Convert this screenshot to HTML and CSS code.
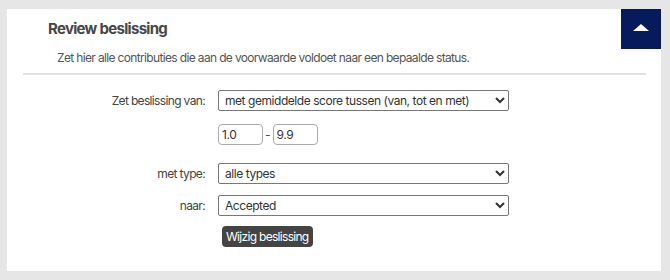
FILE: index.html
```html
<!DOCTYPE html>
<html lang="nl">
<head>
<meta charset="utf-8">
<link rel="stylesheet" href="styles.css">
</head>
<body>
<div class="card">
  <div class="header">
    <h2 class="title">Review beslissing</h2>
    <button class="collapse" aria-label="Inklappen">
      <svg width="16" height="8" viewBox="0 0 16 8"><polygon points="0,7 8,0 16,7" fill="#fff"/></svg>
    </button>
  </div>
  <p class="desc">Zet hier alle contributies die aan de voorwaarde voldoet naar een bepaalde status.</p>
  <hr class="divider">
  <form class="form">
    <div class="row row-first">
      <label class="label">Zet beslissing van:</label>
      <select class="select"><option>met gemiddelde score tussen (van, tot en met)</option></select>
    </div>
    <div class="row row-range">
      <span class="label"></span>
      <div class="range">
        <input class="num" type="text" value="1.0">
        <span class="dash">-</span>
        <input class="num" type="text" value="9.9">
      </div>
    </div>
    <div class="row row-type">
      <label class="label">met type:</label>
      <select class="select"><option>alle types</option></select>
    </div>
    <div class="row row-naar">
      <label class="label">naar:</label>
      <select class="select"><option>Accepted</option></select>
    </div>
    <div class="row row-btn">
      <span class="label"></span>
      <button type="button" class="submit">Wijzig beslissing</button>
    </div>
  </form>
</div>
</body>
</html>
```
FILE: styles.css
```css
html, body {
  margin: 0;
  background: #e6e6e6;
}
body {
  padding: 9px 9px 9px 7px;
  font-family: Inter, "Noto Sans", sans-serif;
}
.card {
  background: #fff;
  height: 262px;
  box-sizing: border-box;
  position: relative;
}
.header {
  display: flex;
  justify-content: space-between;
  align-items: flex-start;
}
.title {
  margin: 0;
  padding: 11px 0 0 41px;
  font-size: 15px;
  font-weight: 700;
  color: #474747;
  letter-spacing: -0.7px;
  line-height: 18px;
}
.collapse {
  width: 40px;
  height: 40px;
  border: 0;
  padding: 0;
  background: #061a5c;
  display: flex;
  align-items: center;
  justify-content: center;
  margin: 0;
}
.collapse svg { display: block; margin-top: -2px; }
.desc {
  margin: 1px 0 0 50px;
  font-size: 12px;
  line-height: 15px;
  color: #555;
  letter-spacing: -0.65px;
}
.divider {
  margin: 8px 15px 0 16px;
  border: 0;
  border-top: 2px solid #e2e2e2;
  height: 0;
}
.form {
  padding-top: 15px;
}
.row {
  display: flex;
  align-items: center;
}
.label {
  width: 198px;
  text-align: right;
  padding-right: 13px;
  font-size: 12px;
  color: #444;
  letter-spacing: -0.65px;
  flex: none;
}
.select {
  width: 291px;
  height: 21px;
  box-sizing: border-box;
  font-family: Inter, "Noto Sans", sans-serif;
  font-size: 12px;
  color: #333;
  border: 1px solid #777;
  border-radius: 2px;
  background: #fff;
  padding: 0 2px;
  margin: 0;
  letter-spacing: -0.45px;
}
.row-range { margin-top: 13px; }
.range {
  display: flex;
  align-items: center;
}
.num {
  width: 45px;
  height: 21px;
  box-sizing: border-box;
  border: 1px solid #aaa;
  border-radius: 4px;
  padding: 0 3px;
  margin: 0;
  font-family: Inter, "Noto Sans", sans-serif;
  font-size: 12px;
  color: #333;
  letter-spacing: -0.4px;
}
.dash {
  font-size: 12px;
  color: #555;
  padding: 0 2px;
}
.row-type { margin-top: 18px; }
.row-naar { margin-top: 11px; }
.row-btn { margin-top: 10px; }
.submit {
  margin: 0 0 0 4px;
  height: 21px;
  padding: 0 4px;
  background: #444;
  color: #fff;
  border: 0;
  border-radius: 4px;
  font-family: Inter, "Noto Sans", sans-serif;
  font-size: 12px;
  letter-spacing: -0.7px;
}
```
